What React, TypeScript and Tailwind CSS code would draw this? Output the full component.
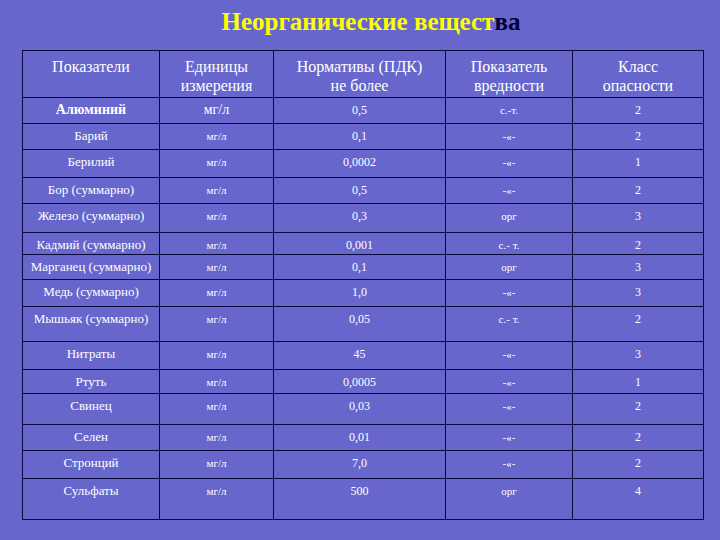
import React from "react";

const rows: { n: string; u: string; v: string; h: string; c: string; height: number; big?: boolean }[] = [
  { n: "Алюминий", u: "мг/л", v: "0,5", h: "с.-т.", c: "2", height: 26, big: true },
  { n: "Барий", u: "мг/л", v: "0,1", h: "-«-", c: "2", height: 26 },
  { n: "Берилий", u: "мг/л", v: "0,0002", h: "-«-", c: "1", height: 28 },
  { n: "Бор (суммарно)", u: "мг/л", v: "0,5", h: "-«-", c: "2", height: 26 },
  { n: "Железо (суммарно)", u: "мг/л", v: "0,3", h: "орг", c: "3", height: 29 },
  { n: "Кадмий (суммарно)", u: "мг/л", v: "0,001", h: "с.- т.", c: "2", height: 22 },
  { n: "Марганец (суммарно)", u: "мг/л", v: "0,1", h: "орг", c: "3", height: 25 },
  { n: "Медь (суммарно)", u: "мг/л", v: "1,0", h: "-«-", c: "3", height: 27 },
  { n: "Мышьяк (суммарно)", u: "мг/л", v: "0,05", h: "с.- т.", c: "2", height: 35 },
  { n: "Нитраты", u: "мг/л", v: "45", h: "-«-", c: "3", height: 28 },
  { n: "Ртуть", u: "мг/л", v: "0,0005", h: "-«-", c: "1", height: 24 },
  { n: "Свинец", u: "мг/л", v: "0,03", h: "-«-", c: "2", height: 31 },
  { n: "Селен", u: "мг/л", v: "0,01", h: "-«-", c: "2", height: 26 },
  { n: "Стронций", u: "мг/л", v: "7,0", h: "-«-", c: "2", height: 28 },
  { n: "Сульфаты", u: "мг/л", v: "500", h: "орг", c: "4", height: 41 },
];

export default function App() {
  const cell = "font-['Liberation_Serif'] border border-[#0a0a3a] text-center align-top pt-[3px] px-1 leading-[18px]";
  const head = "font-['Liberation_Serif'] border border-[#0a0a3a] text-center align-top pt-[6px] px-1 leading-[19px] text-[16px] font-normal";
  return (
    <div className="w-[720px] h-[540px] bg-[#6666cc] text-white overflow-hidden font-['Liberation_Serif']">
      <div className="pt-[8px] h-[50px] pl-[22px] text-center">
        <h1 className="text-[25px] leading-[28px] font-bold text-[#ffff00] font-['Liberation_Serif']">
          Неорганические вещест<span className="text-[#000033]">ва</span>
        </h1>
      </div>
      <table className="ml-[22px] w-[681px] table-fixed border-collapse text-[13px] text-white font-['Liberation_Serif']">
        <colgroup>
          <col className="w-[137px]" />
          <col className="w-[114px]" />
          <col className="w-[172px]" />
          <col className="w-[127px]" />
          <col className="w-[131px]" />
        </colgroup>
        <thead>
          <tr className="h-[47px]">
            <th className={head}>Показатели</th>
            <th className={head}>Единицы<br />измерения</th>
            <th className={head}>Нормативы (ПДК)<br />не более</th>
            <th className={head}>Показатель<br />вредности</th>
            <th className={head}>Класс<br />опасности</th>
          </tr>
        </thead>
        <tbody>
          {rows.map((r) => (
            <tr key={r.n} style={{ height: r.height }}>
              <td className={cell + (r.big ? " text-[14px] font-bold" : "")}>{r.n}</td>
              <td className={cell + (r.big ? " text-[14px]" : " text-[11px]")}>{r.u}</td>
              <td className={cell + " text-[12px]"}>{r.v}</td>
              <td className={cell + " text-[11px]"}>{r.h}</td>
              <td className={cell + " text-[12px]"}>{r.c}</td>
            </tr>
          ))}
        </tbody>
      </table>
    </div>
  );
}
